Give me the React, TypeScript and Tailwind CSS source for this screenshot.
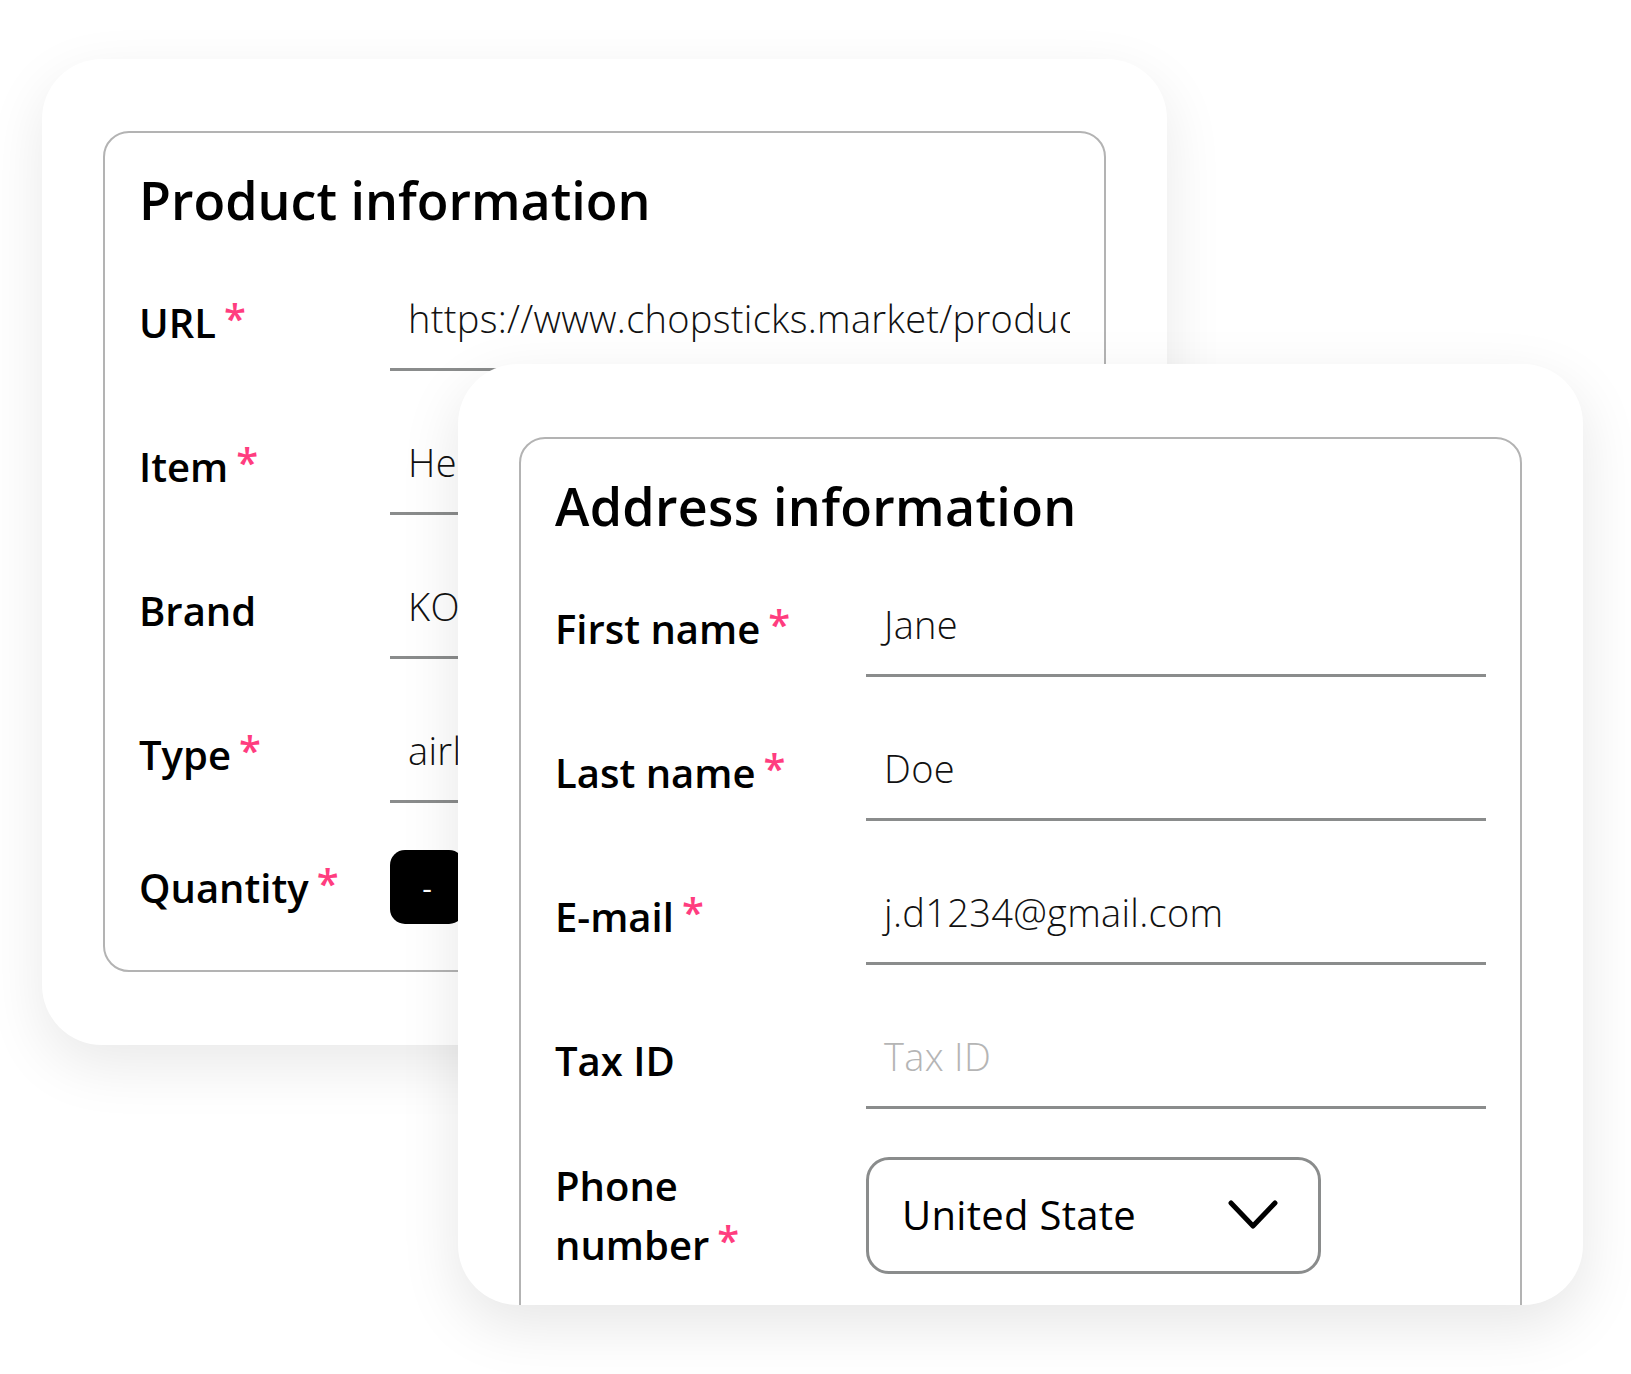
import React from 'react';

const Req = () => (
  <span className="relative -top-[5px] ml-2 text-[40px] font-semibold text-[#ff3d7f]">*</span>
);

type RowProps = { label: React.ReactNode; required?: boolean; children: React.ReactNode; labelWidth: string };

const Row = ({ label, required, children, labelWidth }: RowProps) => (
  <div className={`grid items-center ${labelWidth}`}>
    <div className="text-[40px] font-semibold leading-[59px] text-black">
      {label}
      {required && <Req />}
    </div>
    {children}
  </div>
);

const LineInput = ({ value, placeholder }: { value?: string; placeholder?: string }) => (
  <div className="flex h-[97px] items-center overflow-hidden whitespace-nowrap border-b-[3px] border-[#8a8c8c] pb-[6px] pl-[18px] text-[38px] font-light tracking-[0.3px] text-[#111]">
    {value ? value : <span className="text-[#b5b5b5]">{placeholder}</span>}
  </div>
);

const ProductCard = () => (
  <div className="ml-[42px] mt-[59px] h-[986px] w-[1125px] rounded-[60px] bg-white px-[61px] pb-[73px] pt-[72px] shadow-[0_20px_60px_rgba(0,0,0,0.09)] [grid-area:1/1]">
    <div className="h-full rounded-[26px] border-2 border-[#b3b3b3] px-[34px] pt-[28px]">
      <h2 className="text-[52px] font-semibold leading-[78px] text-black">Product information</h2>
      <div className="mt-[35px] flex flex-col gap-[47px]">
        <Row label="URL" required labelWidth="grid-cols-[251px_1fr]">
          <LineInput value="https://www.chopsticks.market/product/heat-resistant-chopsticks" />
        </Row>
        <Row label="Item" required labelWidth="grid-cols-[251px_1fr]">
          <LineInput value="Heat-resistant chopsticks" />
        </Row>
        <Row label="Brand" labelWidth="grid-cols-[251px_1fr]">
          <LineInput value="KOTOBUKI" />
        </Row>
        <Row label="Type" required labelWidth="grid-cols-[251px_1fr]">
          <LineInput value="airline" />
        </Row>
        <Row label="Quantity" required labelWidth="grid-cols-[251px_1fr]">
          <div className="flex items-center gap-6">
            <button className="flex h-[74px] w-[74px] items-center justify-center rounded-[15px] bg-black text-[30px] text-white">-</button>
            <span className="text-[38px] font-light">1</span>
            <button className="flex h-[74px] w-[74px] items-center justify-center rounded-[15px] bg-black text-[30px] text-white">+</button>
          </div>
        </Row>
      </div>
    </div>
  </div>
);

const AddressCard = () => (
  <div className="ml-[458px] mt-[364px] h-[941px] w-[1125px] self-start overflow-hidden rounded-[60px] bg-white px-[61px] pt-[73px] shadow-[0_20px_60px_rgba(0,0,0,0.1)] [grid-area:1/1]">
    <div className="rounded-[26px] border-2 border-[#b3b3b3] px-[34px] pb-[60px] pt-[28px]">
      <h2 className="text-[52px] font-semibold leading-[78px] tracking-[0.3px] text-black">Address information</h2>
      <div className="mt-[35px] flex flex-col gap-[47px]">
        <Row label="First name" required labelWidth="grid-cols-[311px_1fr]">
          <LineInput value="Jane" />
        </Row>
        <Row label="Last name" required labelWidth="grid-cols-[311px_1fr]">
          <LineInput value="Doe" />
        </Row>
        <Row label="E-mail" required labelWidth="grid-cols-[311px_1fr]">
          <LineInput value="j.d1234@gmail.com" />
        </Row>
        <Row label="Tax ID" labelWidth="grid-cols-[311px_1fr]">
          <LineInput placeholder="Tax ID" />
        </Row>
        <Row
          label={
            <>
              Phone
              <br />
              number
            </>
          }
          required
          labelWidth="grid-cols-[311px_1fr]"
        >
          <div className="flex h-[117px] w-[455px] items-center justify-between rounded-[23px] border-[3px] border-[#8a8c8c] pl-[33px] pr-[40px]">
            <span className="text-[40px] tracking-[0.3px] text-black">United State</span>
            <svg width="50" height="30" viewBox="0 0 50 30" fill="none">
              <polyline points="3,3 25,26 47,3" stroke="#000" strokeWidth="5" strokeLinecap="round" strokeLinejoin="round" />
            </svg>
          </div>
        </Row>
      </div>
    </div>
  </div>
);

export default function App() {
  return (
    <div className="grid h-[1374px] w-[1631px] items-start overflow-hidden bg-white font-['Open_Sans',sans-serif]">
      <ProductCard />
      <AddressCard />
    </div>
  );
}
